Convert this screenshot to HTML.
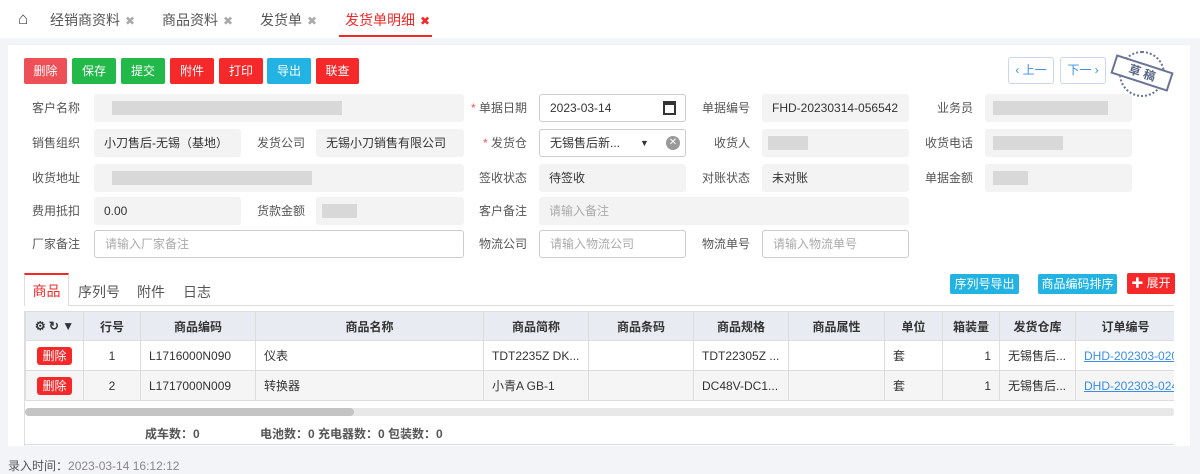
<!DOCTYPE html>
<html><head><meta charset="utf-8"><style>
*{box-sizing:border-box;margin:0;padding:0}
body{width:1200px;height:474px;background:#f3f4f8;font-family:"Liberation Sans","Noto Sans CJK SC",sans-serif;font-size:12px;color:#333;position:relative;overflow:hidden}
.a{position:absolute}
.top{left:0;top:0;width:1200px;height:38px;background:#fff}
.tab{top:10px;font-size:14px;color:#555}
.x{color:#aaa;font-size:12px;margin-left:5px}
.card{left:8px;top:45px;width:1182px;height:401px;background:#fff}
.btn{top:58px;height:26px;color:#fff;font-size:12px;text-align:center;line-height:26px;border-radius:2px}
.r{background:#f5282a}.g{background:#22b94a}.b{background:#23b3e3}
.lb{text-align:right;color:#555;width:70px;height:28px;line-height:28px}
.f{height:28px;line-height:28px;background:#f3f3f3;border-radius:3px;padding-left:10px;color:#333}
.w{background:#fff;border:1px solid #ccc;line-height:26px;color:#aaa}
.bl{background:#d8d8d8;height:14px;top:7px}
.star{color:#e55;}
table{border-collapse:collapse;table-layout:fixed}
td,th{border:1px solid #ddd;height:30px;font-size:12px;white-space:nowrap;overflow:hidden;padding:0 8px}
th{background:#e9ebf3;font-weight:bold;height:29px}
.db{background:#f5282a;color:#fff;font-size:12px;padding:2px 5px;border-radius:3px}
</style></head><body>
<div class="a top"></div>
<div class="a" style="left:18px;top:9px;font-size:17px;color:#444">&#8962;</div>
<div class="a tab" style="left:50px">经销商资料<span class="x">✖</span></div>
<div class="a tab" style="left:162px">商品资料<span class="x">✖</span></div>
<div class="a tab" style="left:260px">发货单<span class="x">✖</span></div>
<div class="a tab" style="left:345px;color:#f5282a">发货单明细<span class="x" style="color:#f5282a">✖</span></div>
<div class="a" style="left:339px;top:35px;width:93px;height:2px;background:#f5282a"></div>
<div class="a card"></div>
<div class="a btn r" style="left:24px;width:43px;background:#ee5057">删除</div>
<div class="a btn g" style="left:72px;width:44px">保存</div>
<div class="a btn g" style="left:121px;width:44px">提交</div>
<div class="a btn r" style="left:170px;width:44px">附件</div>
<div class="a btn r" style="left:219px;width:44px">打印</div>
<div class="a btn b" style="left:267px;width:44px">导出</div>
<div class="a btn r" style="left:316px;width:43px">联查</div>
<div class="a" style="left:1008px;top:57px;width:46px;height:27px;border:1px solid #c9d8ee;border-radius:3px;color:#3a8ee6;text-align:center;line-height:25px;font-size:12px">‹ 上一</div>
<div class="a" style="left:1060px;top:57px;width:46px;height:27px;border:1px solid #c9d8ee;border-radius:3px;color:#3a8ee6;text-align:center;line-height:25px;font-size:12px">下一 ›</div>
<div class="a" style="left:1119px;top:51px;width:46px;height:46px;border:2px dotted #6a7595;border-radius:50%"></div>
<div class="a" style="left:1112px;top:63px;width:60px;height:20px;border:2px solid #6a7595;background:#fff;transform:rotate(18deg);color:#5a6585;font-weight:bold;text-align:center;line-height:16px;font-size:12px">草 稿</div>

<div class="a lb" style="left:10px;top:94px">客户名称</div>
<div class="a f" style="left:94px;top:94px;width:370px"><div class="a bl" style="left:18px;width:230px"></div></div>
<div class="a lb" style="left:457px;top:94px"><span class="star">*</span> 单据日期</div>
<div class="a f w" style="left:539px;top:94px;width:147px;color:#333">2023-03-14<span class="a" style="right:9px;top:6px;width:13px;height:14px;border:2px solid #333;border-top-width:4px"></span></div>
<div class="a lb" style="left:680px;top:94px">单据编号</div>
<div class="a f" style="left:762px;top:94px;width:147px">FHD-20230314-056542</div>
<div class="a lb" style="left:903px;top:94px">业务员</div>
<div class="a f" style="left:985px;top:94px;width:147px"><div class="a bl" style="left:8px;width:115px"></div></div>

<div class="a lb" style="left:10px;top:129px">销售组织</div>
<div class="a f" style="left:94px;top:129px;width:147px">小刀售后-无锡（基地）</div>
<div class="a lb" style="left:235px;top:129px">发货公司</div>
<div class="a f" style="left:316px;top:129px;width:148px">无锡小刀销售有限公司</div>
<div class="a lb" style="left:457px;top:129px"><span class="star">*</span> 发货仓</div>
<div class="a f w" style="left:539px;top:129px;width:147px;color:#333">无锡售后新...<span class="a" style="left:100px;font-size:9px">▼</span><span class="a" style="right:5px;top:6px;width:14px;height:14px;border-radius:50%;background:#999;color:#fff;font-size:10px;line-height:14px;text-align:center">✕</span></div>
<div class="a lb" style="left:680px;top:129px">收货人</div>
<div class="a f" style="left:762px;top:129px;width:147px"><div class="a bl" style="left:6px;width:40px"></div></div>
<div class="a lb" style="left:903px;top:129px">收货电话</div>
<div class="a f" style="left:985px;top:129px;width:147px"><div class="a bl" style="left:8px;width:70px"></div></div>

<div class="a lb" style="left:10px;top:164px">收货地址</div>
<div class="a f" style="left:94px;top:164px;width:370px"><div class="a bl" style="left:18px;width:200px"></div></div>
<div class="a lb" style="left:457px;top:164px">签收状态</div>
<div class="a f" style="left:539px;top:164px;width:147px">待签收</div>
<div class="a lb" style="left:680px;top:164px">对账状态</div>
<div class="a f" style="left:762px;top:164px;width:147px">未对账</div>
<div class="a lb" style="left:903px;top:164px">单据金额</div>
<div class="a f" style="left:985px;top:164px;width:147px"><div class="a bl" style="left:8px;width:35px"></div></div>

<div class="a lb" style="left:10px;top:197px">费用抵扣</div>
<div class="a f" style="left:94px;top:197px;width:147px">0.00</div>
<div class="a lb" style="left:235px;top:197px">货款金额</div>
<div class="a f" style="left:316px;top:197px;width:148px"><div class="a bl" style="left:6px;width:35px"></div></div>
<div class="a lb" style="left:457px;top:197px">客户备注</div>
<div class="a f" style="left:539px;top:197px;width:370px;color:#aaa">请输入备注</div>

<div class="a lb" style="left:10px;top:230px">厂家备注</div>
<div class="a f w" style="left:94px;top:230px;width:370px">请输入厂家备注</div>
<div class="a lb" style="left:457px;top:230px">物流公司</div>
<div class="a f w" style="left:539px;top:230px;width:147px">请输入物流公司</div>
<div class="a lb" style="left:680px;top:230px">物流单号</div>
<div class="a f w" style="left:762px;top:230px;width:147px">请输入物流单号</div>

<div class="a" style="left:24px;top:305px;width:1150px;height:1px;background:#ddd"></div>
<div class="a" style="left:24px;top:273px;width:45px;height:33px;border:1px solid #ddd;border-top:2px solid #f5282a;border-bottom:none;background:#fff;color:#f5282a;font-size:14px;text-align:center;line-height:32px">商品</div>
<div class="a" style="left:78px;top:282px;font-size:14px;color:#555">序列号</div>
<div class="a" style="left:137px;top:282px;font-size:14px;color:#555">附件</div>
<div class="a" style="left:183px;top:282px;font-size:14px;color:#555">日志</div>
<div class="a btn b" style="left:950px;top:274px;width:69px;height:20px;line-height:20px">序列号导出</div>
<div class="a btn b" style="left:1038px;top:274px;width:79px;height:20px;line-height:20px">商品编码排序</div>
<div class="a btn r" style="left:1127px;top:273px;width:48px;height:21px;line-height:21px">✚ 展开</div>

<div class="a" style="left:24px;top:311px;width:1150px;height:135px;overflow:hidden;border-left:1px solid #ddd">
<table style="width:1150px">
<colgroup><col style="width:58px"><col style="width:57px"><col style="width:115px"><col style="width:228px"><col style="width:105px"><col style="width:105px"><col style="width:95px"><col style="width:96px"><col style="width:58px"><col style="width:57px"><col style="width:76px"><col style="width:100px"></colgroup>
<tr><th style="padding:0;font-size:12px">⚙ ↻ ▼</th><th>行号</th><th>商品编码</th><th>商品名称</th><th>商品简称</th><th>商品条码</th><th>商品规格</th><th>商品属性</th><th>单位</th><th>箱装量</th><th>发货仓库</th><th>订单编号</th></tr>
<tr><td style="text-align:center"><span class="db">删除</span></td><td style="text-align:center">1</td><td>L1716000N090</td><td>仪表</td><td>TDT2235Z DK...</td><td></td><td>TDT22305Z ...</td><td></td><td>套</td><td style="text-align:right">1</td><td>无锡售后...</td><td style="color:#3a8ee6;text-decoration:underline">DHD-202303-020</td></tr>
<tr style="background:#f5f5f5"><td style="text-align:center"><span class="db">删除</span></td><td style="text-align:center">2</td><td>L1717000N009</td><td>转换器</td><td>小青A GB-1</td><td></td><td>DC48V-DC1...</td><td></td><td>套</td><td style="text-align:right">1</td><td>无锡售后...</td><td style="color:#3a8ee6;text-decoration:underline">DHD-202303-024</td></tr>
</table>
<div class="a" style="left:0;top:97px;width:1150px;height:8px;background:#e8e8e8;border-radius:4px"></div>
<div class="a" style="left:0;top:97px;width:329px;height:8px;background:#c4c4c4;border-radius:4px"></div>
<div class="a" style="left:120px;top:114px;font-weight:bold;color:#555">成车数：0</div>
<div class="a" style="left:235px;top:114px;font-weight:bold;color:#555">电池数：0 充电器数：0 包装数：0</div>
<div class="a" style="left:0;top:133px;width:1150px;height:1px;background:#ddd"></div>
</div>
<div class="a" style="left:8px;top:457px;color:#555">录入时间：<span style="color:#888">2023-03-14 16:12:12</span></div>
</body></html>
